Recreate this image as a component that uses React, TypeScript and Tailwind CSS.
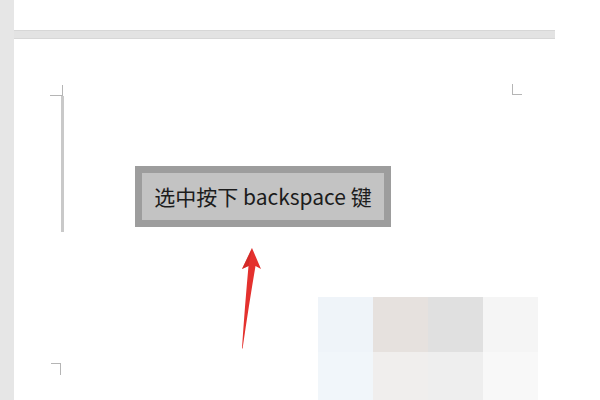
export default function App() {
  // mosaic cells over the lower right
  const mosaic = [
    '#eff4f9', '#e6e1de', '#e0e0e0', '#f5f5f5',
    '#f1f6fa', '#f0eeed', '#eeeeee', '#f8f8f8',
  ];

  return (
    <div className="w-[600px] h-[400px] flex bg-white overflow-hidden" style={{ fontFamily: '"Noto Sans CJK SC", "Noto Sans", sans-serif' }}>
      {/* left gray gutter */}
      <div className="w-[14px] h-full bg-[#e6e6e6]" />

      <div className="flex-1 flex flex-col">
        <div className="h-[30px] bg-white" />
        {/* page separator */}
        <div className="w-[541px] h-[9px] bg-[#e3e3e3] border-y border-[#d7d7d7]" />

        {/* document page */}
        <div className="relative flex-1">
          {/* corner marks */}
          <div className="absolute left-[36px] top-[46px] w-[13px] h-[11px] border-r border-b border-[#b5b5b5]" />
          <div className="absolute left-[498px] top-[45px] w-[10px] h-[11px] border-l border-b border-[#b5b5b5]" />
          <div className="absolute left-[37px] top-[324px] w-[10px] h-[12px] border-t border-r border-[#b5b5b5]" />

          <div className="flex items-start pt-[57px] pl-[47px]">
            <div className="w-[3px] h-[136px] bg-[#c9c9c9]" />
            <div className="ml-[71px] mt-[70px] w-[256px] h-[61px] border-[7px] border-[#9d9d9d] bg-[#c3c3c3] flex items-center justify-center">
              <span className="text-[21px] text-[#1c1c1c] whitespace-nowrap">选中按下 backspace 键</span>
            </div>
          </div>

          {/* red arrow */}
          <svg className="absolute left-[222px] top-[205px]" width="30" height="110" viewBox="0 0 30 110">
            <path d="M16 4 L25 25 L19.5 22 Q13 60 6.5 105 L6 104 Q9 60 12.5 22 L6 25 Z" fill="#e4312e" />
            <path d="M16 4 L12.5 22 L6 25 Z" fill="#c82623" opacity="0.6" />
          </svg>

          {/* mosaic */}
          <div className="absolute left-[304px] top-[258px] grid grid-cols-[repeat(4,55px)] grid-rows-[55px_60px]">
            {mosaic.map((c, i) => (
              <div key={i} style={{ backgroundColor: c }} />
            ))}
          </div>
        </div>
      </div>
    </div>
  );
}
